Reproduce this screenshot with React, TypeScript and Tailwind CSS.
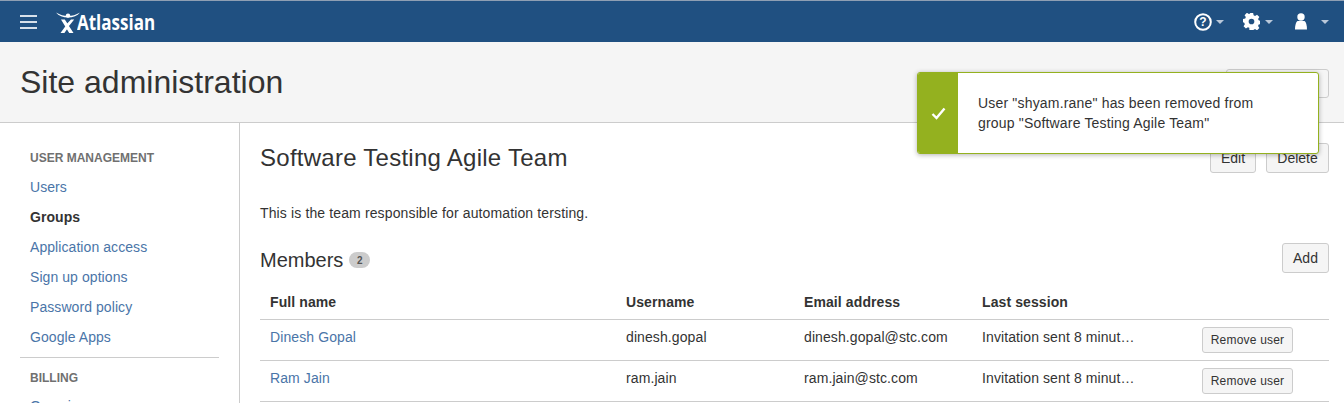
import React from "react";

function Caret({ className = "" }: { className?: string }) {
  return (
    <svg width="8" height="4" viewBox="0 0 8 4" className={className}>
      <path d="M0 0h8L4 4z" fill="#b9c8da" />
    </svg>
  );
}

function Logo() {
  return (
    <svg width="24" height="22" viewBox="0 0 24 22" className="shrink-0">
      <path d="M0 .5C4 3 8 4 12 4S20 3 24 .5C21.500 3.800 17 5.500 12 5.500S2.500 3.800 0 .5z" fill="#fff" />
      <circle cx="12" cy="3.600" r="2.200" fill="#fff" />
      <path d="M5 7.500h3.800L17.500 21h-4.300zM15 7.500h3.200l-5.200 6.500-1.800-2.500zM9.200 14.500l1.800 2.800L8.400 21H4.500z" fill="#fff" />
    </svg>
  );
}

function Btn({ children, className = "" }: { children: React.ReactNode; className?: string }) {
  return (
    <div className={`flex items-center justify-center rounded-[3px] border border-[#cccccc] bg-[#f5f5f5] text-[#333333] ${className}`}>
      {children}
    </div>
  );
}

const nav1 = ["Users", "Groups", "Application access", "Sign up options", "Password policy", "Google Apps"];

const rows = [
  ["Dinesh Gopal", "dinesh.gopal", "dinesh.gopal@stc.com"],
  ["Ram Jain", "ram.jain", "ram.jain@stc.com"],
];

export default function App() {
  return (
    <div className="relative flex h-[403px] w-[1344px] flex-col overflow-hidden bg-white text-[14px] text-[#333333] [font-family:'Liberation_Sans',Arial,sans-serif]">
      <header className="flex h-[42px] shrink-0 items-center border-t border-[#8f9fb3] bg-[#205081] pl-5 pr-[15px] text-white">
        <div className="flex w-[17px] flex-col gap-[4px]">
          <span className="h-[2px] bg-[#d7e0ea]" />
          <span className="h-[2px] bg-[#d7e0ea]" />
          <span className="h-[2px] bg-[#d7e0ea]" />
        </div>
        <div className="ml-[19px] flex items-end">
          <Logo />
          <span className="-ml-[3px] origin-left scale-x-[0.81] text-[21px] leading-[24px] font-bold text-white [font-family:'Open_Sans',sans-serif]">Atlassian</span>
        </div>
        <div className="ml-auto flex items-center">
          <svg width="18" height="18" viewBox="0 0 18 18">
            <circle cx="9" cy="9" r="7.800" fill="none" stroke="#fff" strokeWidth="2" />
            <text x="9" y="13.300" textAnchor="middle" fontSize="12" fontWeight="700" fill="#fff" fontFamily="Liberation Sans">?</text>
          </svg>
          <Caret className="ml-[4px]" />
          <svg width="17" height="17" viewBox="0 0 24 24" className="ml-[19px]">
            <path fill="#fff" fillRule="evenodd" d="M9.700 0h4.600l.7 3.300 2 .8L19.800 2.300l3.300 3.300-1.800 2.800.8 2 3.300.7v4.600l-3.300.7-.8 2 1.800 2.800-3.300 3.300-2.800-1.800-2 .8-.7 3.300H9.700L9 24l-.1-3.100-2-.8-2.800 1.800-3.300-3.300 1.800-2.800-.8-2L-.1 13.100V8.500l3.300-.7.8-2-1.800-2.800L5.500-.3l2.800 1.800 2-.8zM12 8a4 4 0 100 8 4 4 0 000-8z" />
          </svg>
          <Caret className="ml-[5px]" />
          <svg width="12" height="17" viewBox="1 0 12 17" className="ml-[22px]">
            <circle cx="7" cy="4" r="3.700" fill="#fff" />
            <path d="M3.500 8h7c1.500 1 2.500 4 2.500 8.500H1C1 12 2 9 3.500 8z" fill="#fff" />
          </svg>
          <Caret className="ml-[14px]" />
        </div>
      </header>

      <section className="flex h-[81px] shrink-0 items-center justify-between border-b border-[#cccccc] bg-[#f5f5f5] pr-[15px] pl-5">
        <h1 className="text-[32px] leading-[36px] font-normal text-[#333333]">Site administration</h1>
        <Btn className="mt-[2px] h-[29px] w-[103px]">Settings</Btn>
      </section>

      <div className="flex min-h-0 flex-1">
        <aside className="w-[240px] shrink-0 border-r border-[#cccccc] pt-[21px] pl-5 pr-5 tracking-[0.07px]">
          <div className="mb-[8px] h-[20px] pl-[10px] text-[12px] leading-[29px] font-bold tracking-normal text-[#707070]">USER MANAGEMENT</div>
          <ul className="border-b border-[#cccccc] pb-[5px]">
            {nav1.map((n) => (
              <li key={n} className={`h-[30px] pl-[10px] leading-[30px] ${n === "Groups" ? "font-bold text-[#333333]" : "text-[#4a75a8]"}`}>
                {n}
              </li>
            ))}
          </ul>
          <div className="h-[30px] pl-[10px] text-[12px] leading-[40px] font-bold tracking-normal text-[#707070]">BILLING</div>
          <div className="h-[30px] pl-[10px] leading-[36px] text-[#4a75a8]">Overview</div>
        </aside>

        <main className="min-w-0 flex-1 pr-[15px] pl-5">
          <div className="flex h-[71px] items-start justify-between pt-[20px]">
            <h2 className="text-[24px] leading-[30px] font-normal tracking-[0.26px] text-[#333333]">Software Testing Agile Team</h2>
            <div className="flex gap-[10px]">
              <Btn className="h-[30px] w-[46px]">Edit</Btn>
              <Btn className="h-[30px] w-[63px]">Delete</Btn>
            </div>
          </div>
          <p className="h-[49px] leading-[38px] tracking-[0.13px] text-[#333333]">This is the team responsible for automation tersting.</p>
          <div className="flex h-[30px] items-center justify-between">
            <div className="flex items-center pt-[3px]">
              <h3 className="text-[20px] leading-[30px] font-normal text-[#333333]">Members</h3>
              <span className="mt-[1px] ml-[6px] flex h-[16px] w-[21px] items-center justify-center rounded-full bg-[#cccccc] text-[10px] font-bold text-[#555555]">2</span>
            </div>
            <Btn className="h-[30px] w-[47px]">Add</Btn>
          </div>
          <table className="mt-[10px] w-[1069px] table-fixed border-collapse tracking-[0.1px]">
            <thead>
              <tr className="h-[36px] border-b border-[#cccccc] text-left">
                <th className="w-[356px] pt-[4px] pl-[10px] font-bold">Full name</th>
                <th className="w-[178px] pt-[4px] pl-[10px] font-bold">Username</th>
                <th className="w-[178px] pt-[4px] pl-[10px] font-bold">Email address</th>
                <th className="w-[230px] pt-[4px] pl-[10px] font-bold">Last session</th>
                <th />
              </tr>
            </thead>
            <tbody>
              {rows.map((r) => (
                <tr key={r[0]} className="h-[41px] border-b border-[#cccccc]">
                  <td className="pb-[4px] pl-[10px] text-[#4a75a8]">{r[0]}</td>
                  <td className="pb-[4px] pl-[10px]">{r[1]}</td>
                  <td className="pb-[4px] pl-[10px]">{r[2]}</td>
                  <td className="pb-[4px] pl-[10px]">
                    <div className="w-[156px] truncate">Invitation sent 8 minutes ago</div>
                  </td>
                  <td>
                    <Btn className="h-[26px] w-[91px] text-[12px] tracking-[0.2px]">Remove user</Btn>
                  </td>
                </tr>
              ))}
            </tbody>
          </table>
        </main>
      </div>

      <div className="absolute top-[72px] left-[917px] flex h-[82px] w-[402px] overflow-hidden rounded-[3px] border border-[#94b11f] bg-white shadow-[0_1px_5px_rgba(0,0,0,0.3)]">
        <div className="flex w-[40px] shrink-0 items-center justify-center bg-[#94b11f]">
          <svg width="15" height="13" viewBox="0 0 15 13">
            <path d="M1.500 7l4 4 8-9.500" fill="none" stroke="#fff" strokeWidth="2.400" />
          </svg>
        </div>
        <div className="pt-[20px] pl-[20px] leading-[20px] tracking-[0.18px] text-[#333333]">
          User "shyam.rane" has been removed from
          <br />
          group "Software Testing Agile Team"
        </div>
      </div>
    </div>
  );
}
